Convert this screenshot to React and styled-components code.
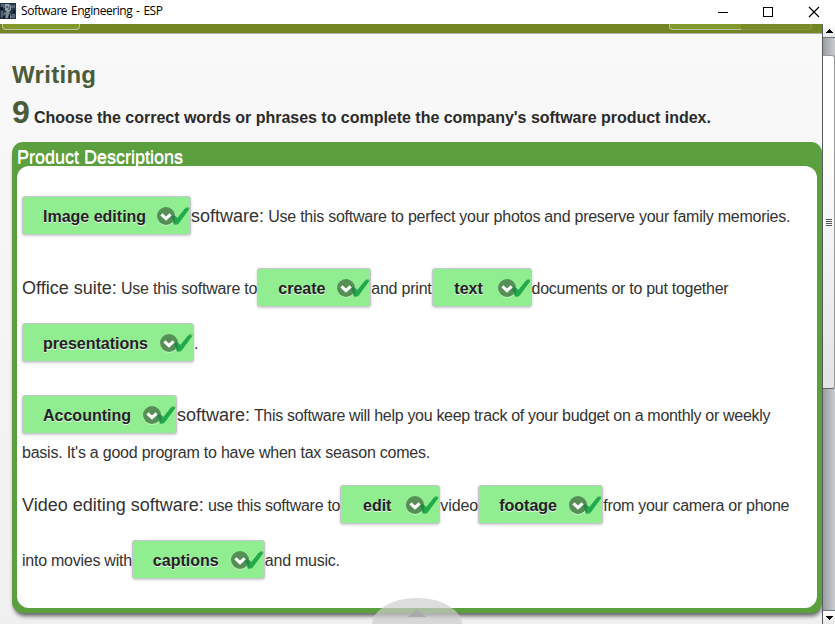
import React from "react";
import styled, { createGlobalStyle } from "styled-components";

const Global = createGlobalStyle`
  * { box-sizing: border-box; }
  body { margin: 0; overflow: hidden; background: #fff; font-family: "Liberation Sans", Arial, sans-serif; }
`;

const Window = styled.div`
  width: 835px;
  height: 624px;
  display: flex;
  flex-direction: column;
  overflow: hidden;
`;

const TitleBar = styled.header`
  height: 24px;
  flex: none;
  display: flex;
  align-items: center;
  background: #fff;
`;

const AppIcon = styled.svg`
  width: 16px;
  height: 16px;
  margin-top: -2px;
`;

const AppTitle = styled.span`
  flex: 1;
  margin: -3px 0 0 5px;
  font: 12px/16px "Open Sans", "Noto Sans", sans-serif;
  letter-spacing: -0.45px;
  word-spacing: 1.2px;
  color: #000;
`;

const WindowControls = styled.svg`
  width: 105px;
  height: 12px;
  margin: -1px 15px 0 0;
`;

const Body = styled.div`
  flex: 1;
  min-height: 0;
  display: flex;
`;

const Viewport = styled.main`
  position: relative;
  width: 822px;
  height: 600px;
  overflow: hidden;
  background: linear-gradient(#f9f9f9, #f0f0f0);
`;

const Toolbar = styled.div`
  height: 10px;
  display: flex;
  justify-content: space-between;
  align-items: flex-start;
  padding: 0 10px 0 2px;
  background: #728624;
  border-bottom: 1px solid #b3b3b3;
`;

const ToolbarGroup = styled.div`
  display: flex;
`;

const ToolbarButton = styled.div`
  width: ${(p) => p.$width}px;
  height: 6px;
  background: ${(p) => (p.$muted ? "#788d29" : "#809928")};
  border: 1px solid ${(p) => (p.$muted ? "#839744" : "#bdc3a4")};
  border-top: 0;
  border-left-width: ${(p) => (p.$muted ? 0 : 1)}px;
  border-right-width: ${(p) => (p.$joined ? 0 : 1)}px;
  border-radius: 0 0 ${(p) => (p.$joined ? 0 : 4)}px ${(p) => (p.$muted ? 0 : 4)}px;
`;

const Heading = styled.h1`
  height: 28px;
  margin: 27px 0 0 12px;
  font-size: 24px;
  line-height: 28px;
  letter-spacing: 0.3px;
  color: #4b5b3a;
`;

const Instruction = styled.h2`
  height: 37px;
  margin: 5px 0 11px 12px;
  display: flex;
  align-items: baseline;
  font-size: 16px;
  line-height: 37px;
  letter-spacing: -0.02px;
  color: #2b2b2b;
  white-space: nowrap;
`;

const Number = styled.span`
  width: 22px;
  font-size: 32px;
  color: #4b5b3a;
`;

const Panel = styled.section`
  width: 810px;
  height: 471px;
  margin-left: 12px;
  padding: 0 5px 5px;
  background: #5c9f3e;
  border-radius: 11px;
  box-shadow: 1px 4px 4px -1px rgba(0, 0, 0, 0.6);
`;

const PanelTitle = styled.h3`
  height: 24px;
  margin: 0;
  padding-top: 5px;
  font-size: 18px;
  line-height: 20px;
  font-weight: 400;
  color: #fff;
  text-shadow: 0 1px 0 #fff;
`;

const PanelContent = styled.div`
  height: 442px;
  padding: 23px 5px 0;
  border-radius: 12px;
  background: #fff;
`;

const Row = styled.div`
  height: ${(p) => p.$height || 55}px;
  margin-bottom: ${(p) => p.$gap || 0}px;
  display: flex;
  align-items: center;
  font-size: 16px;
  line-height: 20px;
  color: #333;
  white-space: pre;
`;

const Sentence = styled.span`
  flex: none;
  letter-spacing: ${(p) => p.$tracking ?? -0.25}px;
`;

const Label = styled.span`
  font-size: 18px;
  letter-spacing: 0;
`;

const Choice = styled.button`
  position: relative;
  flex: none;
  width: ${(p) => p.$width}px;
  height: 39px;
  margin: 0 0 2px;
  padding: 2px 46px 0 20px;
  background: #90ee90;
  border: 1px solid #c6c6cf;
  border-radius: 3px;
  box-shadow: 0 1px 3px rgba(0, 0, 0, 0.2);
  font: bold 16px/20px "Liberation Sans", Arial, sans-serif;
  color: #222;
  text-shadow: 0 1px 0 #f3f3f3;
  text-align: center;
  white-space: nowrap;
`;

const ChoiceMarks = styled.svg`
  position: absolute;
  right: 0;
  top: 9px;
  width: 34px;
  height: 20px;
`;

const PullTab = styled.svg`
  position: absolute;
  left: 371px;
  bottom: 0;
  width: 92px;
  height: 27px;
`;

const ScrollBar = styled.aside`
  width: 13px;
  display: flex;
  flex-direction: column;
  border-left: 1px solid #555a5f;
  background: linear-gradient(90deg, #989da1, #c9cccf);
`;

const ScrollButton = styled.div`
  height: 14px;
  flex: none;
  display: flex;
  justify-content: center;
  align-items: center;
  background: linear-gradient(#fff, #e8e8e8);
  border: solid #70757a;
  border-width: ${(p) => (p.$down ? "1px 0 0" : "0 0 1px")};
`;

const Thumb = styled.div`
  height: 334px;
  margin-top: 17px;
  padding-top: 1px;
  display: flex;
  justify-content: center;
  align-items: center;
  border: 1px solid #999;
  border-left: 0;
  border-bottom-color: #666;
  border-radius: 0 3px 3px 0;
  background: linear-gradient(#fff 25%, #e3e3e3);
`;

const Spacer = styled.div`
  flex: 1;
`;

function Arrow({ down }) {
  return (
    <svg width="7" height="4" shapeRendering="crispEdges">
      <path d={down ? "M0 0h7v1H6v1H5v1H4v1H3V3H2V2H1V1H0z" : "M3 0h1v1h1v1h1v1h1v1H0V3h1V2h1V1h1z"} fill="#000" />
    </svg>
  );
}

function Answer({ width, children }) {
  return (
    <Choice $width={width}>
      {children}
      <ChoiceMarks viewBox="0 0 34 20">
        <circle cx="10" cy="11" r="9" fill="#c2f4c2" />
        <circle cx="10" cy="10" r="9" fill="#568f56" />
        <path d="M5.4 8.3L10 12.6l4.6-4.3" fill="none" stroke="#fff" strokeWidth="3.1" />
        <path d="M15.5 11l1.8-2 4.2 3.4 8.2-10.2 2.2-.9 1.1 1.5L22 17.8l-3.6.5z" fill="#22aa4a" stroke="#22aa4a" strokeWidth="1" strokeLinejoin="round" />
        <path d="M15 11l2-2.3 2 1.7v7.4z" fill="#2f7849" fillOpacity=".75" />
        <path d="M29.5 2.2l1.8-1 1.3 1.2" fill="none" stroke="#80cf95" strokeWidth="1" />
      </ChoiceMarks>
    </Choice>
  );
}

export default function App() {
  return (
    <Window>
      <Global />
      <TitleBar>
        <AppIcon viewBox="0 0 16 16">
          <path fill="#263647" d="M0 0h16v16H0z" />
          <path fill="#536577" d="M1 1h4v4H1zM11 2h4v3h-4zM1 8h2v6H1zM12 11h3v4h-3z" />
          <path fill="#93a3ab" d="M5 1h4l2 2v4L8 10 5 7z" />
          <path fill="#53646e" d="M6 3h2v2H6zM9 3h1v4H8z" />
          <path fill="#7d8c94" d="M7 9l3 1 2 5H5l1-4-3 1 1-2z" />
          <path fill="#101b28" d="M0 4h3v3H0zM9 11h1v4H8zM13 7h2v3h-2zM3 13h2v3H3z" />
        </AppIcon>
        <AppTitle>Software Engineering - ESP</AppTitle>
        <WindowControls viewBox="0 0 105 12" fill="none" stroke="#000">
          <path d="M3 6.5h10" shapeRendering="crispEdges" />
          <path d="M48.5 1.5h9v9h-9z" shapeRendering="crispEdges" />
          <path d="M94 1l10 10M104 1L94 11" strokeWidth="1.2" />
        </WindowControls>
      </TitleBar>
      <Body>
        <Viewport>
          <Toolbar>
            <ToolbarButton $width={78} />
            <ToolbarGroup>
              <ToolbarButton $width={72} $joined />
              <ToolbarButton $width={71} $muted />
            </ToolbarGroup>
          </Toolbar>
          <Heading>Writing</Heading>
          <Instruction>
            <Number>9</Number>
            <span>Choose the correct words or phrases to complete the company's software product index.</span>
          </Instruction>
          <Panel>
            <PanelTitle>Product Descriptions</PanelTitle>
            <PanelContent>
              <Row $gap={17}>
                <Answer width={169}>Image editing</Answer>
                <Sentence><Label>software:</Label> Use this software to perfect your photos and preserve your family memories.</Sentence>
              </Row>
              <Row>
                <Sentence $tracking={-0.21}><Label>Office suite:</Label> Use this software to</Sentence>
                <Answer width={114}>create</Answer>
                <Sentence $tracking={-0.22}>and print</Sentence>
                <Answer width={100}>text</Answer>
                <Sentence $tracking={-0.28}>documents or to put together</Sentence>
              </Row>
              <Row $gap={17}>
                <Answer width={172}>presentations</Answer>
                <Sentence>.</Sentence>
              </Row>
              <Row>
                <Answer width={155}>Accounting</Answer>
                <Sentence $tracking={-0.31}><Label>software:</Label> This software will help you keep track of your budget on a monthly or weekly</Sentence>
              </Row>
              <Row $height={20} $gap={15}>
                <Sentence $tracking={-0.23}>basis. It's a good program to have when tax season comes.</Sentence>
              </Row>
              <Row>
                <Sentence $tracking={-0.28}><Label>Video editing software:</Label> use this software to</Sentence>
                <Answer width={100}>edit</Answer>
                <Sentence $tracking={-0.05}>video</Sentence>
                <Answer width={125}>footage</Answer>
                <Sentence $tracking={-0.28}>from your camera or phone</Sentence>
              </Row>
              <Row>
                <Sentence>into movies with</Sentence>
                <Answer width={133}>captions</Answer>
                <Sentence>and music.</Sentence>
              </Row>
            </PanelContent>
          </Panel>
          <PullTab viewBox="0 0 92 27">
            <path d="M1 27Q1 17 14 9Q27 1 46 1T78 9Q91 17 91 27z" fill="#cdcdcd" fillOpacity=".68" />
            <path d="M37 20l9-8 9 8z" fill="#aaa" />
          </PullTab>
        </Viewport>
        <ScrollBar>
          <ScrollButton><Arrow /></ScrollButton>
          <Thumb>
            <svg width="6" height="8" shapeRendering="crispEdges">
              <path d="M0 .5h6M0 2.5h6M0 4.5h6M0 6.5h6" stroke="#555" />
            </svg>
          </Thumb>
          <Spacer />
          <ScrollButton $down><Arrow down /></ScrollButton>
        </ScrollBar>
      </Body>
    </Window>
  );
}
